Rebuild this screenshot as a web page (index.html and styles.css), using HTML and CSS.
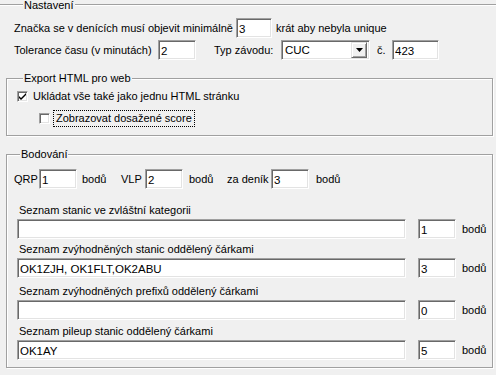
FILE: index.html
```html
<!DOCTYPE html>
<html lang="cs">
  <head>
    <meta charset="UTF-8" />
    <title>Nastavení</title>
    <link rel="stylesheet" href="styles.css">
  </head>

  <body>
    <fieldset class="group main">
      <legend>Nastavení</legend>

      <div class="row r1">
        <span class="lbl w222">Značka se v denících musí objevit minimálně</span>
        <input class="edit w36" value="3" />
        <span class="after">krát aby nebyla unique</span>
      </div>

      <div class="row r2">
        <span class="lbl w144">Tolerance času (v minutách)</span>
        <input class="edit w38" value="2" />
        <span class="lbl typ">Typ závodu:</span>
        <div class="combo">
          <span class="combo-text">CUC</span>
          <span class="drop">
            <svg width="7" height="4" viewBox="0 0 7 4"><path d="M0 0h7L3.5 4z" fill="#000" /></svg>
          </span>
        </div>
        <span class="lbl cislo">č.</span>
        <input class="edit w47" value="423" />
      </div>

      <fieldset class="group export">
        <legend>Export HTML pro web</legend>
        <label class="check c1">
          <span class="box checked">
            <svg width="9" height="9" viewBox="0 0 9 9"><path d="M1 4l2 2 5-5v2l-5 5-2-2z" fill="#000" /></svg>
          </span>
          Ukládat vše také jako jednu HTML stránku
        </label>
        <label class="check c2">
          <span class="box"></span>
          <span class="focus">Zobrazovat dosažené score</span>
        </label>
      </fieldset>

      <fieldset class="group score">
        <legend>Bodování</legend>

        <div class="row points">
          <span class="lbl w25">QRP</span>
          <input class="edit w38" value="1" />
          <span class="lbl bodu1">bodů</span>
          <span class="lbl w24">VLP</span>
          <input class="edit w38" value="2" />
          <span class="lbl bodu2">bodů</span>
          <span class="lbl w44">za deník</span>
          <input class="edit w38" value="3" />
          <span class="lbl bodu3">bodů</span>
        </div>

        <div class="list l1">
          <div class="list-label">Seznam stanic ve zvláštní kategorii</div>
          <div class="row">
            <input class="edit wide" value="" />
            <input class="edit w38 small" value="1" />
            <span class="lbl bodu">bodů</span>
          </div>
        </div>

        <div class="list l2">
          <div class="list-label">Seznam zvýhodněných stanic oddělený čárkami</div>
          <div class="row">
            <input class="edit wide" value="OK1ZJH, OK1FLT,OK2ABU" />
            <input class="edit w38 small" value="3" />
            <span class="lbl bodu">bodů</span>
          </div>
        </div>

        <div class="list l3">
          <div class="list-label">Seznam zvýhodněných prefixů oddělený čárkami</div>
          <div class="row">
            <input class="edit wide" value="" />
            <input class="edit w38 small" value="0" />
            <span class="lbl bodu">bodů</span>
          </div>
        </div>

        <div class="list l4">
          <div class="list-label">Seznam pileup stanic oddělený čárkami</div>
          <div class="row">
            <input class="edit wide" value="OK1AY" />
            <input class="edit w38 small" value="5" />
            <span class="lbl bodu">bodů</span>
          </div>
        </div>
      </fieldset>
    </fieldset>
  </body>
</html>
```

FILE: styles.css
```css
* {
  box-sizing: border-box;
}

body {
  margin: 0;
  background-color: #f0f0f0;
  font-family: "Liberation Sans", Arial, sans-serif;
  font-size: 11px;
  color: #000;
  overflow: hidden;
  height: 375px;
}

/* etched group box */
.group {
  margin: 0;
  padding: 0;
  border: 1px solid #a0a0a0;
  box-shadow: inset 1px 1px 0 #fff, 1px 1px 0 #fff;
  min-width: 0;
}

.group legend {
  padding: 0 1px;
  margin-left: 6px;
  line-height: 13px;
  background-color: #f0f0f0;
}

.main {
  margin: -2px -20px 0 -3px;
  padding: 0 0 20px 16px;
}

.main > legend {
  margin-left: 9px;
  padding-top: 3px;
  line-height: 9px;
}

.row {
  display: flex;
  align-items: center;
}

.lbl {
  flex-shrink: 0;
  white-space: nowrap;
}

.r1 {
  margin-top: 8px;
}

.r2 {
  margin-top: 2px;
}

.w222 { width: 222px; }
.w144 { width: 144px; }
.w25 { width: 25px; }
.w24 { width: 24px; }
.w44 { width: 44px; }

.after {
  margin-left: 4px;
}

.typ {
  margin-left: 18px;
  width: 67px;
}

.cislo {
  margin-left: 7px;
  width: 15px;
}

/* sunken edit box */
.edit {
  height: 20px;
  margin: 0;
  padding: 1px 2px 0;
  font: inherit;
  font-size: 11.5px;
  line-height: 16px;
  color: #000;
  background-color: #fff;
  border: 1px solid;
  border-color: #a0a0a0 #fff #fff #a0a0a0;
  box-shadow: inset 1px 1px 0 #696969, inset -1px -1px 0 #e3e3e3;
  outline: none;
  flex-shrink: 0;
  vertical-align: top;
}

.w36 { width: 36px; }
.w38 { width: 38px; }
.w47 { width: 47px; }

.combo {
  width: 89px;
  height: 20px;
  display: flex;
  align-items: center;
  justify-content: space-between;
  background-color: #fff;
  border: 1px solid;
  border-color: #a0a0a0 #fff #fff #a0a0a0;
  box-shadow: inset 1px 1px 0 #696969, inset -1px -1px 0 #e3e3e3;
  padding: 0 2px 0 3px;
  font-size: 11.5px;
  flex-shrink: 0;
}

.drop {
  width: 16px;
  height: 16px;
  display: flex;
  align-items: center;
  justify-content: center;
  background-color: #f0f0f0;
  border: 1px solid;
  border-color: #e3e3e3 #696969 #696969 #e3e3e3;
  box-shadow: inset 1px 1px 0 #fff, inset -1px -1px 0 #a0a0a0;
}

/* export */
.export {
  margin: 12px 0 0 -8px;
  width: 487px;
  padding: 0 0 10px 10px;
}

.check {
  display: flex;
  align-items: center;
  gap: 5px;
  line-height: 13px;
}

.c1 {
  margin-top: 5px;
}

.c2 {
  margin: 9px 0 0 22px;
}

.box {
  width: 11px;
  height: 11px;
  display: flex;
  align-items: center;
  justify-content: center;
  background-color: #fff;
  border: 1px solid;
  border-color: #a0a0a0 #fff #fff #a0a0a0;
  box-shadow: inset 1px 1px 0 #696969, inset -1px -1px 0 #e3e3e3;
}

.focus {
  outline: 1px dotted #000;
  outline-offset: 1px;
  padding: 0 1px;
}

/* body points */
.score {
  margin: 12px 0 0 -8px;
  width: 487px;
  padding: 0 0 7px 7px;
}

.points {
  margin-top: 8px;
}

.bodu1 {
  margin-left: 5px;
  width: 39px;
}

.bodu2 {
  margin-left: 6px;
  width: 38px;
}

.bodu3 {
  margin-left: 7px;
}

.l1 { margin-top: 14px; }
.l2 { margin-top: 3px; }
.l3 { margin-top: 6px; }
.l4 { margin-top: 4px; }

.list-label {
  padding-left: 5px;
  line-height: 14px;
  margin-bottom: 2px;
}

.list .row {
  padding-left: 3px;
}

.wide {
  width: 389px;
}

.small {
  margin-left: 12px;
}

.bodu {
  margin-left: 6px;
}
```
